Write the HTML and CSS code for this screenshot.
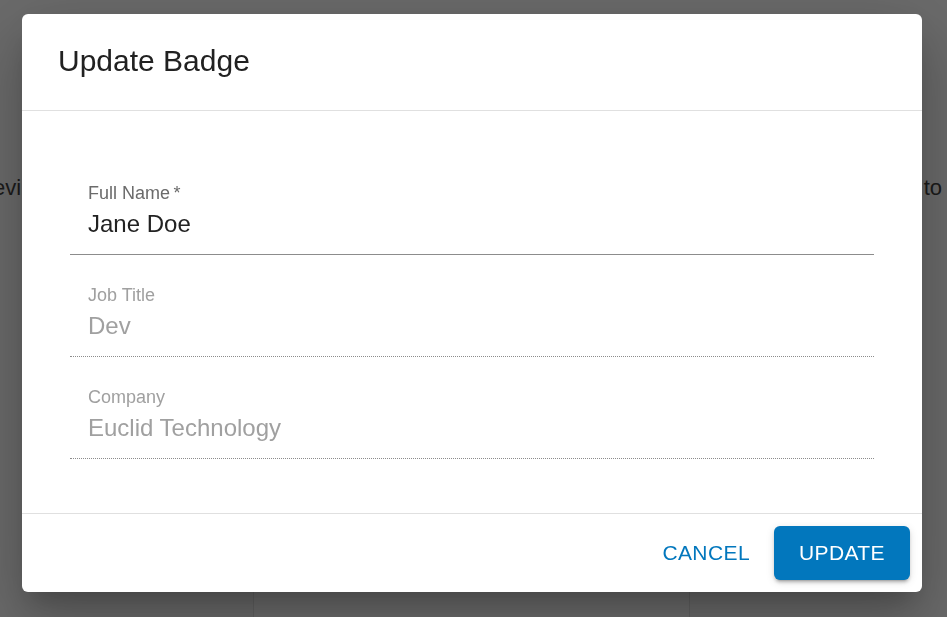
FILE: index.html
```html
<!DOCTYPE html>
<html lang="en">
<head>
<meta charset="utf-8">
<title>Update Badge</title>
<link rel="stylesheet" href="styles.css">
</head>
<body>
<div class="page">
  <div class="page-line"><span class="bg-left">evi</span><span class="bg-right">to</span></div>
  <div class="bg-card"></div>
</div>
<div class="backdrop">
  <div class="dialog" role="dialog" aria-labelledby="dlg-title">
    <div class="dialog-title" id="dlg-title">Update Badge</div>
    <div class="dialog-content">
      <div class="field">
        <label class="field-label">Full Name&thinsp;*</label>
        <div class="field-value">Jane Doe</div>
      </div>
      <div class="field field-disabled">
        <label class="field-label">Job Title</label>
        <div class="field-value">Dev</div>
      </div>
      <div class="field field-disabled">
        <label class="field-label">Company</label>
        <div class="field-value">Euclid Technology</div>
      </div>
    </div>
    <div class="dialog-actions">
      <button class="btn btn-text" type="button">CANCEL</button>
      <button class="btn btn-contained" type="button">UPDATE</button>
    </div>
  </div>
</div>
</body>
</html>
```

FILE: styles.css
```css
* { box-sizing: border-box; }

html, body {
  margin: 0;
  padding: 0;
  height: 617px;
  overflow: hidden;
}

body {
  background: #6b6b6b;
  font-family: "Liberation Sans", Arial, sans-serif;
}

.page {
  height: 617px;
  padding-top: 175px;
  overflow: hidden;
}

.page-line {
  display: flex;
  justify-content: space-between;
  font-size: 22px;
  line-height: 26px;
  color: #1b1b1b;
}

.bg-left { margin-left: -7px; }
.bg-right { margin-right: 5px; }

.bg-card {
  margin-top: 359px;
  margin-left: 253px;
  width: 437px;
  height: 57px;
  background: #6d6d6d;
  border-left: 1px solid #626262;
  border-right: 1px solid #626262;
}

.backdrop {
  position: fixed;
  inset: 0;
  padding: 14px 25px 0 22px;
  display: flex;
  align-items: flex-start;
}

.dialog {
  flex: 1;
  background: #ffffff;
  border-radius: 6px;
  box-shadow:
    0 16px 22px -10px rgba(0, 0, 0, 0.2),
    0 36px 57px 4px rgba(0, 0, 0, 0.14),
    0 13px 69px 12px rgba(0, 0, 0, 0.12);
  display: flex;
  flex-direction: column;
}

.dialog-title {
  padding: 23px 36px 25px;
  font-size: 30px;
  line-height: 48px;
  color: #212121;
  border-bottom: 1px solid #e0e0e0;
}

.dialog-content {
  padding: 72px 48px 54px;
  display: flex;
  flex-direction: column;
  gap: 30px;
}

.field {
  border-bottom: 1px solid #8c8c8c;
}

.field-disabled {
  border-bottom: 1px dotted #8c8c8c;
}

.field-label {
  display: block;
  padding-left: 18px;
  font-size: 18px;
  line-height: 21px;
  color: #6b6b6b;
}

.field-value {
  margin-top: 6px;
  padding: 0 0 16px 18px;
  font-size: 24px;
  line-height: 28px;
  color: #222222;
}

.field-disabled .field-label,
.field-disabled .field-value {
  color: #a0a0a0;
}

.dialog-actions {
  border-top: 1px solid #e0e0e0;
  padding: 12px;
  display: flex;
  justify-content: flex-end;
  gap: 12px;
}

.btn {
  font-family: "Liberation Sans", Arial, sans-serif;
  font-size: 21px;
  line-height: 36px;
  letter-spacing: 0.4px;
  border: 0;
  border-radius: 6px;
  background: transparent;
  cursor: pointer;
  margin: 0;
}

.btn-text {
  padding: 9px 12px;
  color: #0277bd;
}

.btn-contained {
  padding: 9px 25px;
  color: #ffffff;
  background: #0277bd;
  box-shadow:
    0 4px 2px -3px rgba(0, 0, 0, 0.2),
    0 3px 3px 0 rgba(0, 0, 0, 0.14),
    0 2px 8px 0 rgba(0, 0, 0, 0.12);
}
```
